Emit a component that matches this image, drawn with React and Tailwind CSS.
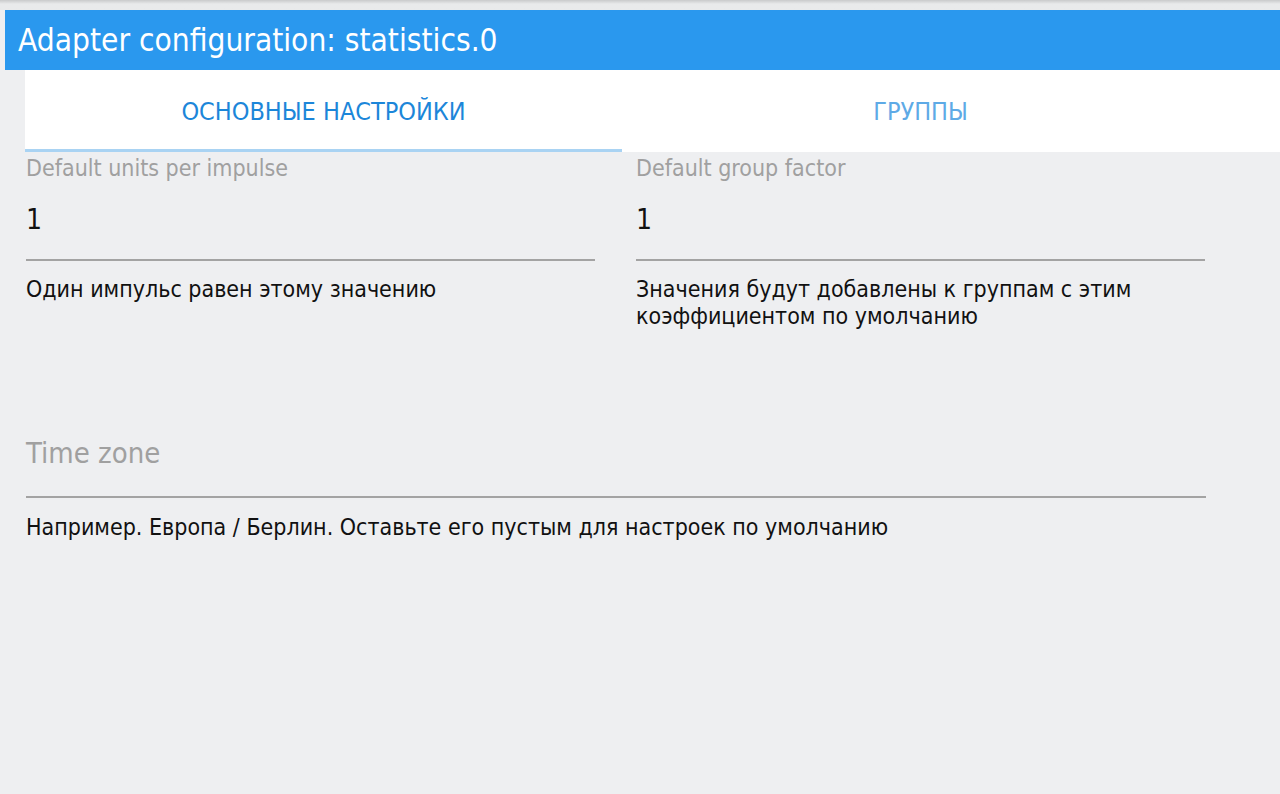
export default function App() {
  const font = { fontFamily: '"DejaVu Sans Condensed", "DejaVu Sans", sans-serif' };
  return (
    <div className="w-[1280px] h-[794px] bg-[#eeeff1] overflow-hidden flex flex-col" style={font}>
      <div className="h-[10px] shrink-0 bg-gradient-to-b from-[#c9cacb] to-[#e9eaeb] to-40%" />
      <div className="ml-[5px] h-[60px] shrink-0 bg-[#2a98ee] flex items-center pl-[13px] text-white text-[31.4px] leading-none pt-[2px]">
        Adapter configuration: statistics.0
      </div>
      <div className="ml-[25px] h-[82px] shrink-0 bg-white flex">
        <div className="w-[597px] h-full flex flex-col">
          <div className="flex-1 flex items-center justify-center text-[25px] leading-none text-[#1c86d9] pt-[4px]">ОСНОВНЫЕ НАСТРОЙКИ</div>
          <div className="h-[3px] bg-[#a9d3f3]" />
        </div>
        <div className="w-[597px] h-full flex items-center justify-center text-[25px] leading-none text-[#5eaae6] pt-[1px]">ГРУППЫ</div>
      </div>
      <div className="pl-[26px] pt-[1px] flex flex-col">
        <div className="flex gap-[41px]">
          <div className="w-[569px] flex flex-col">
            <div className="text-[23px] leading-[30px] text-[#a0a0a0]">Default units per impulse</div>
            <div className="text-[28px] leading-[34px] text-[#111] mt-[20px]">1</div>
            <div className="h-[2px] bg-[#a3a3a3] mt-[22px]" />
            <div className="text-[23px] leading-[27px] text-[#111] mt-[15px]">Один импульс равен этому значению</div>
          </div>
          <div className="w-[569px] flex flex-col">
            <div className="text-[23px] leading-[30px] text-[#a0a0a0]">Default group factor</div>
            <div className="text-[28px] leading-[34px] text-[#111] mt-[20px]">1</div>
            <div className="h-[2px] bg-[#a3a3a3] mt-[22px]" />
            <div className="text-[23px] leading-[27px] text-[#111] mt-[15px]">Значения будут добавлены к группам с этим коэффициентом по умолчанию</div>
          </div>
        </div>
        <div className="w-[1180px] flex flex-col mt-[106px]">
          <div className="text-[29px] leading-[34px] text-[#a0a0a0]">Time zone</div>
          <div className="h-[2px] bg-[#a3a3a3] mt-[26px]" />
          <div className="text-[23px] leading-[28px] text-[#111] mt-[15px]">Например. Европа / Берлин. Оставьте его пустым для настроек по умолчанию</div>
        </div>
      </div>
    </div>
  );
}
